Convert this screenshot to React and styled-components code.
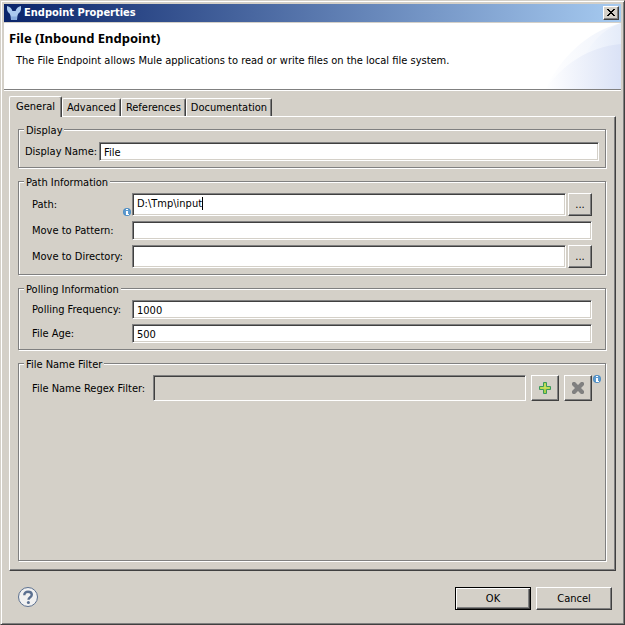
import React, { useState } from "react";
import styled, { createGlobalStyle, css } from "styled-components";

const face = "#d4d0c8";
const light = "#ffffff";
const shade = "#808080";
const dark = "#404040";

const raised = css`
  border: 1px solid;
  border-color: ${light} ${dark} ${dark} ${light};
  box-shadow: inset -1px -1px 0 ${shade};
`;

const sunken = css`
  border: 1px solid;
  border-color: ${shade} ${light} ${light} ${shade};
  box-shadow: inset 1px 1px 0 ${dark}, inset -1px -1px 0 ${face};
`;

const GlobalStyle = createGlobalStyle`
  * { box-sizing: border-box; }
  body {
    margin: 0;
    background: ${face};
    color: #000;
    font: 11px/14px "DejaVu Sans Condensed", Tahoma, "DejaVu Sans", sans-serif;
  }
  button, input { font: inherit; color: inherit; }
`;

const Dialog = styled.div`
  display: flex;
  flex-direction: column;
  min-height: 100vh;
  padding: 3px;
  background: ${face};
  border: 1px solid;
  border-color: ${face} ${dark} ${dark} ${face};
  box-shadow: inset 1px 1px 0 ${light}, inset -1px -1px 0 ${shade};
`;

const TitleBar = styled.header`
  display: flex;
  align-items: center;
  gap: 3px;
  height: 18px;
  padding: 0 2px 0 3px;
  background: linear-gradient(90deg, #0a246a, #a6caf0);
  color: #fff;
  font-weight: bold;
`;

const TitleText = styled.span`
  flex: 1;
`;

const CloseButton = styled.button`
  ${raised}
  display: flex;
  align-items: center;
  justify-content: center;
  width: 16px;
  height: 14px;
  padding: 0 1px 1px 0;
  background: ${face};
`;

const Banner = styled.section`
  display: flex;
  justify-content: space-between;
  height: 68px;
  margin-top: 1px;
  background: #fff;
  border-bottom: 1px solid ${light};
  box-shadow: inset 0 -1px 0 ${shade};
`;

const BannerText = styled.div`
  padding: 7px 0 0 5px;
`;

const Heading = styled.h1`
  margin: 0;
  font-family: "Noto Sans", Tahoma, sans-serif;
  font-size: 13px;
  line-height: 16px;
`;

const Description = styled.p`
  margin: 8px 0 0 7px;
  white-space: nowrap;
`;

const Swoosh = styled.svg`
  flex: none;
  width: 80px;
  height: 66px;
`;

const Tabs = styled.div`
  display: flex;
  align-items: flex-end;
  margin: 5px 5px 0;
`;

const Tab = styled.button`
  height: ${(p) => (p.$active ? 21 : 18)}px;
  margin-bottom: ${(p) => (p.$active ? -1 : 0)}px;
  padding: ${(p) => (p.$active ? "0 6px 1px" : "1px 4px 0")};
  background: ${face};
  border: 1px solid;
  border-color: ${light} ${dark} transparent ${light};
  border-bottom: 0;
  border-radius: 2px 2px 0 0;
  box-shadow: inset -1px 0 0 ${shade};
  z-index: ${(p) => (p.$active ? 1 : 0)};
`;

const Panel = styled.main`
  ${raised}
  display: flex;
  flex: 1;
  flex-direction: column;
  gap: 5px;
  margin: 0 5px;
  padding: 4px 9px 9px 8px;
`;

const Group = styled.fieldset`
  flex: ${(p) => (p.$fill ? 1 : "none")};
  min-width: 0;
  margin: 0;
  padding: 0;
  border: 1px solid ${shade};
  box-shadow: 1px 1px 0 ${light}, inset 1px 1px 0 ${light};
`;

const Legend = styled.legend`
  margin-left: 5px;
  padding: 3px 2px 0;
  background: ${face};
`;

const Rows = styled.div`
  display: flex;
  flex-direction: column;
  gap: 5px;
  padding: ${(p) => (p.$tight ? "4px 6px 6px" : "3px 13px 6px")};
`;

const Row = styled.div`
  display: flex;
  align-items: stretch;
`;

const LabelCell = styled.div`
  display: flex;
  flex: none;
  align-items: center;
  justify-content: space-between;
  width: ${(p) => p.$width}px;
  padding-top: 1px;
  white-space: nowrap;
`;

const Input = styled.input`
  ${sunken}
  flex: 1;
  min-width: 0;
  height: ${(p) => p.$height || 19}px;
  padding: 1px 4px 0;
  background: #fff;
  outline: 0;
  &:disabled { background: ${face}; }
`;

const FocusedBox = styled.div`
  ${sunken}
  display: flex;
  flex: 1;
  align-items: flex-start;
  min-width: 0;
  height: 23px;
  padding: 3px 4px;
  background: #fff;
`;

const BareInput = styled.input`
  field-sizing: content;
  height: 14px;
  padding: 0;
  border: 0;
  outline: 0;
  background: none;
  caret-color: transparent;
`;

const Caret = styled.span`
  width: 1px;
  height: 13px;
  background: #000;
`;

const ToolButton = styled.button`
  ${raised}
  display: flex;
  flex: none;
  align-items: center;
  justify-content: center;
  width: ${(p) => (p.$large ? 28 : 24)}px;
  margin-left: ${(p) => (p.$large ? 5 : 2)}px;
  padding: 0;
  background: ${face};
`;

const InfoMark = styled.svg`
  flex: none;
  width: 8px;
  height: 8px;
  align-self: ${(p) => (p.$top ? "flex-start" : "flex-end")};
  margin-right: ${(p) => (p.$top ? -9 : 1)}px;
  margin-left: 1px;
`;

const Footer = styled.footer`
  display: flex;
  align-items: flex-start;
  gap: 5px;
  padding: 16px 9px 11px 13px;
`;

const HelpButton = styled.button`
  width: 22px;
  height: 22px;
  margin-right: auto;
  padding: 0;
  border: 0;
  background: none;
`;

const PushButton = styled.button`
  ${raised}
  width: 76px;
  height: 23px;
  padding: 0;
  background: ${face};
  ${(p) =>
    p.$default &&
    css`
      border-color: #000;
      box-shadow: inset 1px 1px 0 ${light}, inset -1px -1px 0 ${dark}, inset -2px -2px 0 ${shade};
    `}
`;

const Info = ({ top }) => (
  <InfoMark $top={top} viewBox="0 0 8 8" aria-hidden="true">
    <circle cx="4" cy="4" r="4" fill="#4b8cc4" />
    <circle cx="4" cy="4" r="3" fill="#5d9bd0" />
    <path d="M3 1h2v1H3zM3 3h2v3h1v1H3V4z" fill="#fff" />
  </InfoMark>
);

const MuleIcon = () => (
  <svg width="14" height="14" viewBox="0 0 14 14" aria-hidden="true">
    <path
      d="M0 0C3 .5 4.800 2.500 5.400 5h3.200C9.200 2.500 11 .5 14 0c.4 3.400-.2 6-2.800 7.800L10.400 10 10 14H4L3.600 10 2.800 7.800C.2 6-.4 3.400 0 0z"
      fill="#a9c9ee"
    />
    <path d="M4 10.500h6L9.700 14H4.300z" fill="#86abdc" />
  </svg>
);

const BannerArt = () => (
  <Swoosh viewBox="0 0 80 66" preserveAspectRatio="none" aria-hidden="true">
    <defs>
      <linearGradient id="outer" x1="0" x2="1">
        <stop offset="0" stopColor="#fff" />
        <stop offset="1" stopColor="#eef2fb" />
      </linearGradient>
      <linearGradient id="middle" x1="0" x2="1">
        <stop offset="0" stopColor="#f8fafe" />
        <stop offset="1" stopColor="#e4ebf9" />
      </linearGradient>
      <linearGradient id="inner" x1="0" x2="1">
        <stop offset="0" stopColor="#fff" />
        <stop offset="1" stopColor="#dae2f6" />
      </linearGradient>
    </defs>
    <path d="M4 66C20 35 45 9 80 0V66z" fill="url(#outer)" />
    <path d="M38 42C48 22 60 7 80 0V66H38z" fill="url(#middle)" />
    <path d="M4 66C22 42 46 24 80 21V66z" fill="url(#inner)" />
  </Swoosh>
);

const tabNames = ["General", "Advanced", "References", "Documentation"];

export default function App() {
  const [path, setPath] = useState("D:\\Tmp\\input");
  return (
    <>
      <GlobalStyle />
      <Dialog role="dialog" aria-labelledby="dialog-title">
        <TitleBar>
          <MuleIcon />
          <TitleText id="dialog-title">Endpoint Properties</TitleText>
          <CloseButton aria-label="Close">
            <svg width="8" height="7" viewBox="0 0 8 7" shapeRendering="crispEdges" aria-hidden="true">
              <path d="M0 0h2v1H0zM6 0h2v1H6zM1 1h2v1H1zM5 1h2v1H5zM2 2h4v1H2zM3 3h2v1H3zM2 4h4v1H2zM1 5h2v1H1zM5 5h2v1H5zM0 6h2v1H0zM6 6h2v1H6z" />
            </svg>
          </CloseButton>
        </TitleBar>
        <Banner>
          <BannerText>
            <Heading>File (Inbound Endpoint)</Heading>
            <Description>
              The File Endpoint allows Mule applications to read or write files on the local file system.
            </Description>
          </BannerText>
          <BannerArt />
        </Banner>
        <Tabs role="tablist">
          {tabNames.map((name, i) => (
            <Tab key={name} role="tab" aria-selected={i === 0} $active={i === 0}>
              {name}
            </Tab>
          ))}
        </Tabs>
        <Panel>
          <Group>
            <Legend>Display</Legend>
            <Rows $tight>
              <Row>
                <LabelCell $width={74}>
                  <label htmlFor="name">Display Name:</label>
                </LabelCell>
                <Input id="name" defaultValue="File" />
              </Row>
            </Rows>
          </Group>
          <Group>
            <Legend>Path Information</Legend>
            <Rows>
              <Row>
                <LabelCell $width={100}>
                  <label htmlFor="path">Path:</label>
                  <Info />
                </LabelCell>
                <FocusedBox>
                  <BareInput id="path" value={path} onChange={(e) => setPath(e.target.value)} />
                  <Caret />
                </FocusedBox>
                <ToolButton aria-label="Browse path">...</ToolButton>
              </Row>
              <Row>
                <LabelCell $width={100}>
                  <label htmlFor="pattern">Move to Pattern:</label>
                </LabelCell>
                <Input id="pattern" />
              </Row>
              <Row>
                <LabelCell $width={100}>
                  <label htmlFor="directory">Move to Directory:</label>
                </LabelCell>
                <Input id="directory" $height={23} />
                <ToolButton aria-label="Browse directory">...</ToolButton>
              </Row>
            </Rows>
          </Group>
          <Group>
            <Legend>Polling Information</Legend>
            <Rows>
              <Row>
                <LabelCell $width={100}>
                  <label htmlFor="frequency">Polling Frequency:</label>
                </LabelCell>
                <Input id="frequency" defaultValue="1000" />
              </Row>
              <Row>
                <LabelCell $width={100}>
                  <label htmlFor="age">File Age:</label>
                </LabelCell>
                <Input id="age" defaultValue="500" />
              </Row>
            </Rows>
          </Group>
          <Group $fill>
            <Legend>File Name Filter</Legend>
            <Rows>
              <Row>
                <LabelCell $width={121}>
                  <label htmlFor="filter">File Name Regex Filter:</label>
                </LabelCell>
                <Input id="filter" $height={26} disabled />
                <ToolButton $large aria-label="Add filter">
                  <svg width="12" height="12" viewBox="0 0 12 12" aria-hidden="true">
                    <path d="M4.500 .5h3v4h4v3h-4v4h-3v-4h-4v-3h4z" fill="#a9d045" stroke="#3a9a5c" />
                    <path d="M5.500 1.500h1v4h4v1h-9v-1h4z" fill="#d8e66a" />
                  </svg>
                </ToolButton>
                <ToolButton $large aria-label="Remove filter">
                  <svg width="12" height="12" viewBox="0 0 12 12" aria-hidden="true">
                    <path
                      d="M1 0h2l3 3 3-3h2l1 1v2L9 6l3 3v2l-1 1H9L6 9l-3 3H1l-1-1V9l3-3-3-3V1z"
                      fill="#808080"
                    />
                  </svg>
                </ToolButton>
                <Info top />
              </Row>
            </Rows>
          </Group>
        </Panel>
        <Footer>
          <HelpButton aria-label="Help">
            <svg width="22" height="22" viewBox="0 0 22 22" aria-hidden="true">
              <circle cx="11" cy="10" r="9.500" fill="#f1f1f1" stroke="#5b7090" />
              <path
                d="M7.300 8.200C7.300 5.900 8.800 4.700 11 4.700s3.800 1.200 3.800 3.100c0 2.400-3.300 2.500-3.300 5"
                fill="none"
                stroke="#5b7090"
                strokeWidth="2.400"
              />
              <circle cx="11.400" cy="15.500" r="1.500" fill="#5b7090" />
            </svg>
          </HelpButton>
          <PushButton $default>OK</PushButton>
          <PushButton>Cancel</PushButton>
        </Footer>
      </Dialog>
    </>
  );
}
